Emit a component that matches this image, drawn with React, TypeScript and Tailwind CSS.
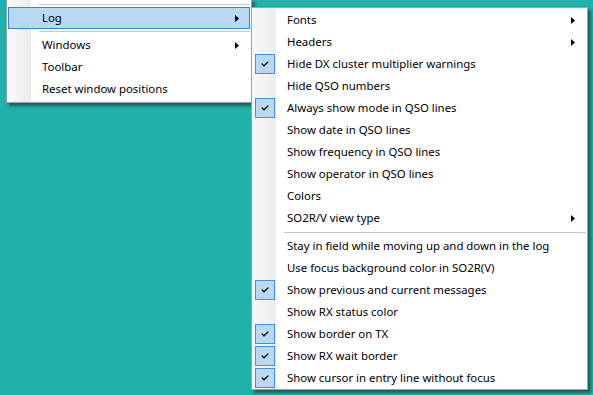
import React from "react";

type Item =
  | { kind: "sep" }
  | { kind: "item"; label: string; checked?: boolean; sub?: boolean; active?: boolean };

const leftItems: Item[] = [
  { kind: "sep" },
  { kind: "item", label: "Log", sub: true, active: true },
  { kind: "sep" },
  { kind: "item", label: "Windows", sub: true },
  { kind: "item", label: "Toolbar" },
  { kind: "item", label: "Reset window positions" },
];

const rightItems: Item[] = [
  { kind: "item", label: "Fonts", sub: true },
  { kind: "item", label: "Headers", sub: true },
  { kind: "item", label: "Hide DX cluster multiplier warnings", checked: true },
  { kind: "item", label: "Hide QSO numbers" },
  { kind: "item", label: "Always show mode in QSO lines", checked: true },
  { kind: "item", label: "Show date in QSO lines" },
  { kind: "item", label: "Show frequency in QSO lines" },
  { kind: "item", label: "Show operator in QSO lines" },
  { kind: "item", label: "Colors" },
  { kind: "item", label: "SO2R/V view type", sub: true },
  { kind: "sep" },
  { kind: "item", label: "Stay in field while moving up and down in the log" },
  { kind: "item", label: "Use focus background color in SO2R(V)" },
  { kind: "item", label: "Show previous and current messages", checked: true },
  { kind: "item", label: "Show RX status color" },
  { kind: "item", label: "Show border on TX", checked: true },
  { kind: "item", label: "Show RX wait border", checked: true },
  { kind: "item", label: "Show cursor in entry line without focus", checked: true },
];

function Arrow() {
  return (
    <svg width="4" height="7" viewBox="0 0 4 7" className="shrink-0">
      <polygon points="0,0 4,3.5 0,7" fill="#000" />
    </svg>
  );
}

function Check() {
  return (
    <svg width="8" height="6" viewBox="0 0 8 6">
      <path d="M0.7 2.6 L3 4.8 L7.3 0.6" fill="none" stroke="#000" strokeWidth="1.3" />
    </svg>
  );
}

function Row({ item, sepH }: { item: Item; sepH: string }) {
  if (item.kind === "sep") {
    return (
      <div className={`${sepH} flex items-center pl-[32px] pr-[1px]`}>
        <div className="h-px w-full bg-[#c8c8c8]" />
      </div>
    );
  }
  return (
    <div
      className={`relative h-[22px] flex items-center mx-px ${
        item.active ? "bg-[#b9d8f3] border border-[#2e87dc]" : "border border-transparent"
      }`}
    >
      <div className="w-[33px] h-full shrink-0 flex items-center pl-[1px]">
        {item.checked && (
          <div className="w-[20px] h-[20px] bg-[#b9d8f3] border border-[#3f90df] flex items-center justify-center">
            <Check />
          </div>
        )}
      </div>
      <span className="flex-1 whitespace-nowrap text-black">{item.label}</span>
      {item.sub && (
        <div className="w-[14px] flex items-center">
          <Arrow />
        </div>
      )}
    </div>
  );
}

function Menu({ items, className, sepH }: { items: Item[]; className: string; sepH: string }) {
  return (
    <div
      className={`absolute bg-white border border-[#a0a0a0] shadow-[3px_3px_3px_rgba(0,0,0,0.45)] ${className}`}
    >
      <div className="absolute left-0 top-0 bottom-0 w-[24px] bg-gradient-to-r from-[#f9f9f9] to-[#ececec]" />
      <div className="relative flex flex-col">
        {items.map((it, i) => (
          <Row key={i} item={it} sepH={sepH} />
        ))}
      </div>
    </div>
  );
}

export default function App() {
  return (
    <div
      className="relative w-[593px] h-[395px] overflow-hidden bg-[#20b2aa] text-[11.4px]"
      style={{ fontFamily: '"Noto Sans", "Open Sans", sans-serif' }}
    >
      <Menu items={leftItems} sepH="h-[5px]" className="left-[6px] top-[-1px] w-[246px] pt-[2px] pb-[2px]" />
      <Menu items={rightItems} sepH="h-[6px]" className="left-[251px] top-[7px] w-[337px] pt-px" />
    </div>
  );
}
